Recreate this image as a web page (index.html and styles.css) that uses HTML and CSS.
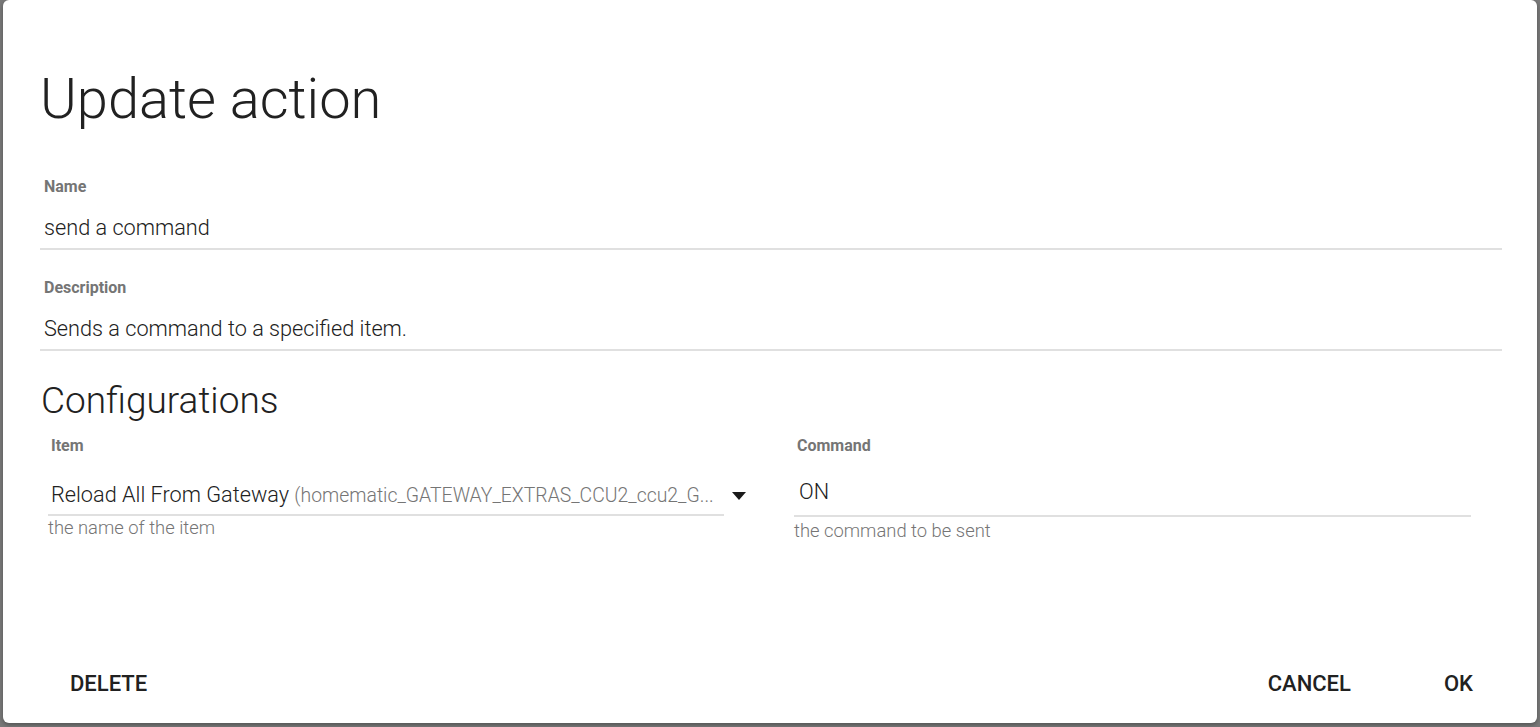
FILE: index.html
```html
<!DOCTYPE html>
<html>
<head>
<meta charset="utf-8">
<link rel="stylesheet" href="styles.css">
</head>
<body>
<div class="dialog">
  <div class="content">
    <h2 class="title">Update action</h2>
    <div class="field first">
      <div class="label">Name</div>
      <div class="value">send a command</div>
    </div>
    <div class="field">
      <div class="label">Description</div>
      <div class="value">Sends a command to a specified item.</div>
    </div>
    <h3 class="section">Configurations</h3>
    <div class="config">
      <div class="cfield item">
        <div class="label">Item</div>
        <div class="selectrow">
          <div class="select"><span class="main">Reload All From Gateway</span> <span class="sub">(homematic_GATEWAY_EXTRAS_CCU2_ccu2_G...</span></div>
          <svg class="arrow" width="14" height="8" viewBox="0 0 14 8"><path d="M0 0H14L7 8Z" fill="#1a1a1a"/></svg>
        </div>
        <div class="hint">the name of the item</div>
      </div>
      <div class="cfield cmd">
        <div class="label">Command</div>
        <div class="input">ON</div>
        <div class="hint">the command to be sent</div>
      </div>
    </div>
  </div>
  <div class="actions">
    <button class="btn">DELETE</button>
    <div class="spacer"></div>
    <button class="btn">CANCEL</button>
    <button class="btn">OK</button>
  </div>
</div>
</body>
</html>
```
FILE: styles.css
```css
html, body {
  margin: 0;
  padding: 0;
  height: 727px;
  overflow: hidden;
}
body {
  background: #787878;
  font-family: Roboto, "Noto Sans", sans-serif;
  color: #212121;
}
.dialog {
  box-sizing: border-box;
  margin: 0 3px;
  height: 723px;
  background: #fff;
  border-radius: 6px;
  display: flex;
  flex-direction: column;
  box-shadow: 0 2px 4px rgba(0,0,0,0.3);
}
.content {
  flex: 1;
  padding: 0 35px 0 37px;
}
.title {
  margin: 66px 0 0 0;
  font-weight: 300;
  font-size: 56px;
  line-height: 66px;
}
.field.first {
  margin-top: 46px;
}
.field {
  margin-top: 29px;
}
.label {
  font-size: 16px;
  font-weight: 700;
  color: #757575;
  line-height: 18px;
  padding-left: 4px;
}
.value {
  font-size: 21.7px;
  font-weight: 300;
  line-height: 28px;
  padding: 18px 0 6px 4px;
  border-bottom: 2px solid #e0e0e0;
  color: #212121;
}
.section {
  margin: 28px 0 0 1px;
  font-weight: 300;
  font-size: 37px;
  line-height: 44px;
}
.config {
  display: flex;
  margin-top: 14px;
  padding-left: 8px;
}
.cfield.item {
  width: 700px;
}
.cfield.cmd {
  width: 677px;
  margin-left: 46px;
}
.cfield .label {
  padding-left: 3px;
}
.selectrow {
  display: flex;
  align-items: flex-start;
  margin-top: 26px;
}
.select {
  width: 676px;
  box-sizing: border-box;
  white-space: nowrap;
  overflow: hidden;
  font-size: 21.7px;
  font-weight: 300;
  line-height: 28px;
  padding: 0 0 4px 3px;
  border-bottom: 2px solid #e0e0e0;
}
.select .sub {
  font-size: 19.4px;
  color: #757575;
}
.arrow {
  margin-left: 8px;
  margin-top: 11px;
}
.input {
  font-size: 21.7px;
  font-weight: 300;
  line-height: 28px;
  margin-top: 23px;
  padding: 0 0 9px 5px;
  border-bottom: 2px solid #e0e0e0;
}
.hint {
  font-size: 18.4px;
  font-weight: 300;
  color: #757575;
  line-height: 22px;
  margin-top: 1px;
}
.cmd .hint {
  margin-top: 3px;
}
.actions {
  display: flex;
  align-items: center;
  padding: 0 44px 13px 47px;
  height: 54px;
}
.spacer {
  flex: 1;
}
.btn {
  background: none;
  border: none;
  font-family: Roboto, sans-serif;
  font-size: 22px;
  font-weight: 500;
  color: #212121;
  padding: 0 20px;
  margin: 0;
}
.btn + .btn {
  margin-left: 53px;
}
```
